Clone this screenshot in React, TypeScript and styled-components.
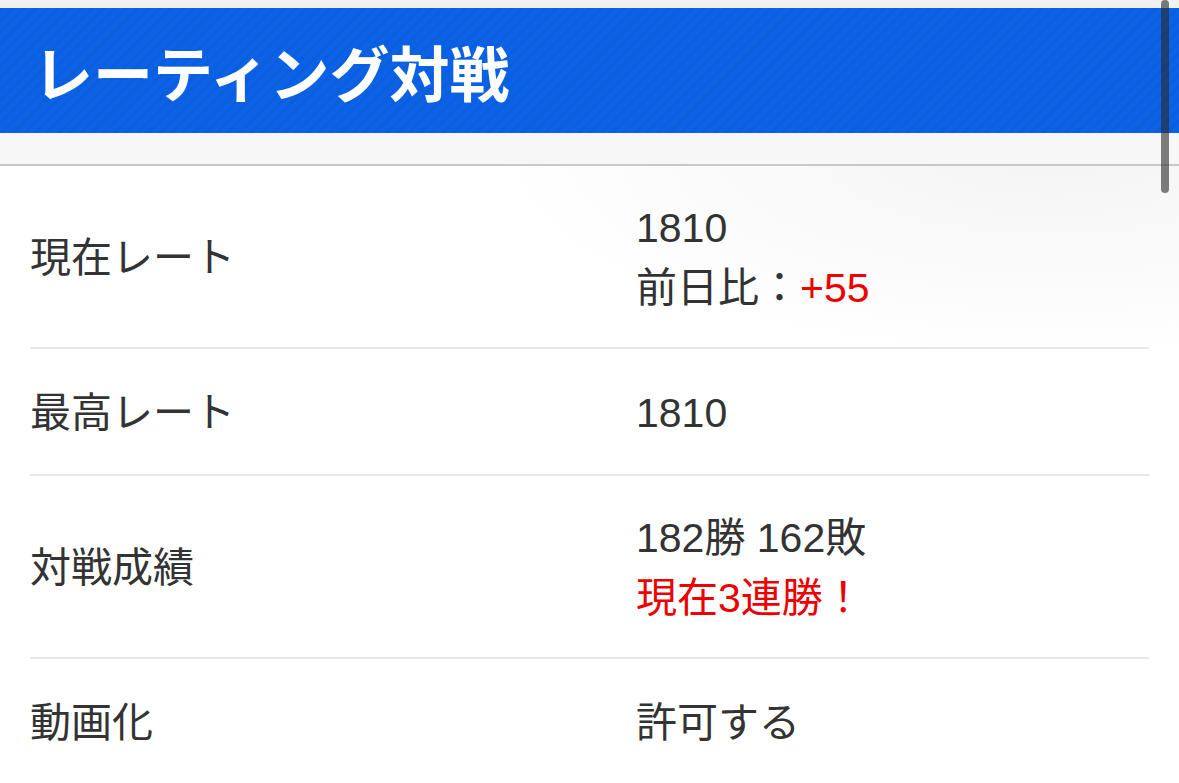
import styled, { createGlobalStyle } from "styled-components";

const GlobalStyle = createGlobalStyle`
  html, body {
    margin: 0;
    padding: 0;
    background: #fbfbfb;
    overflow: hidden;
  }
  body {
    font-family: "Liberation Sans", "Noto Sans CJK JP", sans-serif;
    color: #333;
  }
`;

const Page = styled.div`
  position: relative;
  width: 1179px;
  height: 783px;
  padding-top: 8px;
  box-sizing: border-box;
  background: linear-gradient(180deg, #f1f1f1 0 8px, transparent 8px),
    radial-gradient(ellipse 700px 260px at 1050px 150px, #f4f4f4, #ffffff 80%);
  overflow: hidden;
`;

const TitleBar = styled.header`
  height: 125px;
  display: flex;
  align-items: center;
  padding-left: 33px;
  background-color: #0c62e6;
  background-image: repeating-linear-gradient(
    135deg,
    rgba(0, 0, 0, 0.045) 0 3px,
    rgba(0, 0, 0, 0) 3px 8px
  );
`;

const Title = styled.h1`
  margin: 0;
  color: #fff;
  font-size: 60px;
  font-weight: 700;
  letter-spacing: 0;
  font-family: "Noto Sans CJK JP", sans-serif;
`;

const HeadGap = styled.div`
  height: 31px;
  background: #f7f7f7;
  border-bottom: 2px solid #c8c8c8;
`;

const Table = styled.div`
  margin: 0 30px;
`;

const Row = styled.div`
  display: grid;
  grid-template-columns: 606px 1fr;
  align-items: center;
  padding: 32px 0 29px;
  border-bottom: 2px solid #e8e8e8;
  font-size: 41px;
`;

const Label = styled.div`
  color: #333;
  line-height: 64px;
`;

const Value = styled.div`
  display: flex;
  flex-direction: column;
  color: #333;
  line-height: 60px;
`;

const Red = styled.span`
  color: #ec0000;
`;

const ScrollThumb = styled.div`
  position: absolute;
  top: 0;
  right: 10px;
  width: 8px;
  height: 193px;
  border-radius: 4px;
  background: rgba(40, 40, 40, 0.6);
`;

const rows = [
  { label: "現在レート", lines: [<>1810</>, <>前日比：<Red>+55</Red></>] },
  { label: "最高レート", lines: [<>1810</>] },
  { label: "対戦成績", lines: [<>182勝 162敗</>, <Red>現在3連勝！</Red>] },
  { label: "動画化", lines: [<>許可する</>] },
];

export default function App() {
  return (
    <Page>
      <GlobalStyle />
      <TitleBar>
        <Title>レーティング対戦</Title>
      </TitleBar>
      <HeadGap />
      <Table>
        {rows.map((r) => (
          <Row key={r.label}>
            <Label>{r.label}</Label>
            <Value>
              {r.lines.map((l, i) => (
                <span key={i}>{l}</span>
              ))}
            </Value>
          </Row>
        ))}
      </Table>
      <ScrollThumb />
    </Page>
  );
}
